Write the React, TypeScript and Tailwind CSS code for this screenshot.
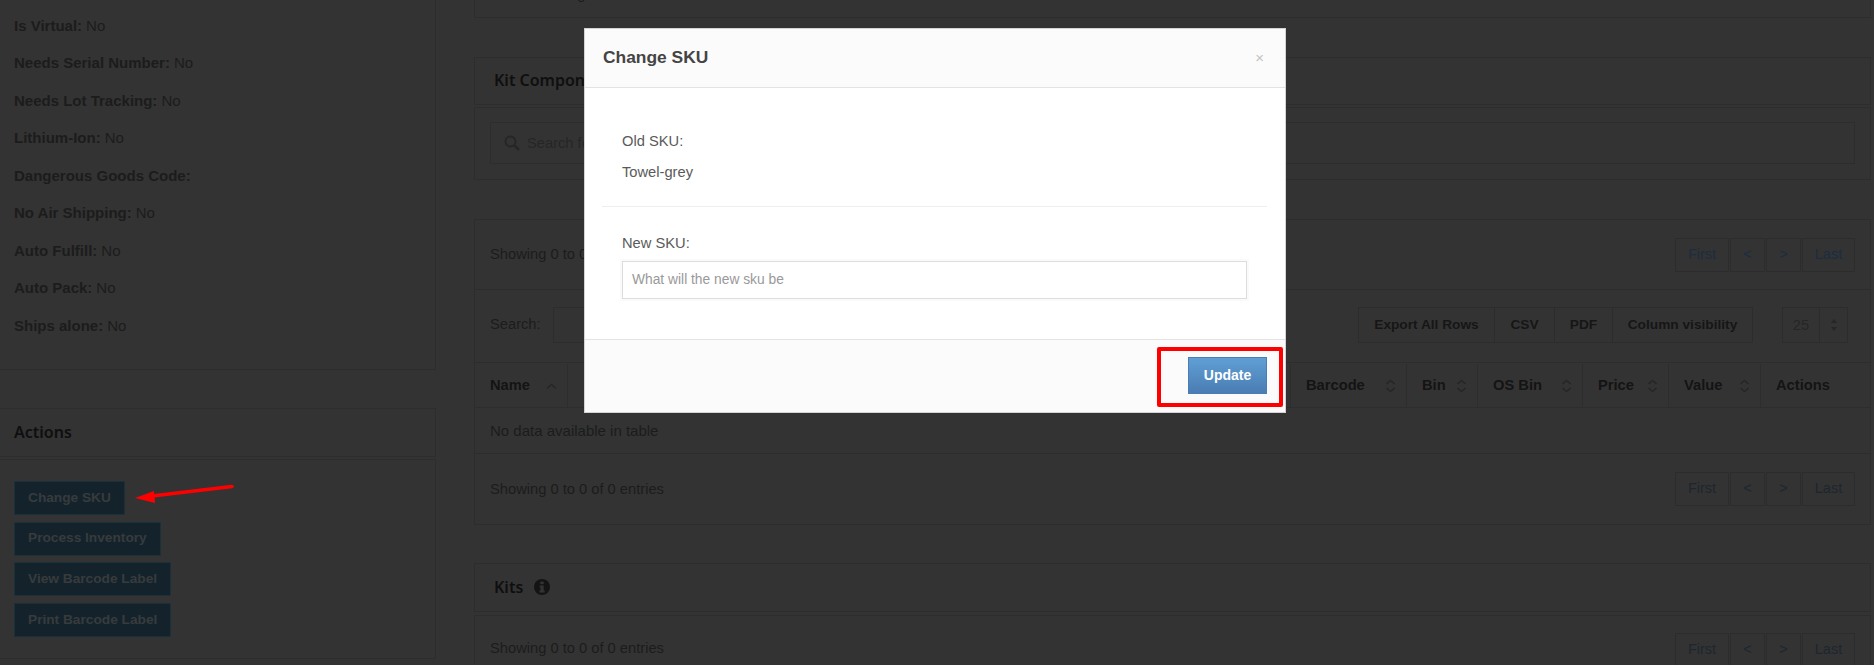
import React from "react";

const sans = "font-['Liberation_Sans',Arial,sans-serif]";
const head = "font-['Noto_Sans','Open_Sans',sans-serif]";

function Sort({ only }: { only?: boolean }) {
  return (
    <svg width="11" height="14" viewBox="0 0 11 14" fill="none" stroke="#262626" strokeWidth="1.6" className="shrink-0">
      {only ? (
        <path d="M1 9.5 L5.5 5.5 L10 9.5" />
      ) : (
        <>
          <path d="M1.5 5 L5.5 1.5 L9.5 5" />
          <path d="M1.5 9 L5.5 12.5 L9.5 9" />
        </>
      )}
    </svg>
  );
}

function Pager({ tone }: { tone: string }) {
  return (
    <div className={`flex text-[14.5px] ${tone}`}>
      {[
        ["First", "w-[54px] mr-[1px]"],
        ["<", "w-[35px] mr-[1px]"],
        [">", "w-[35px] mr-[1px]"],
        ["Last", "w-[53px]"],
      ].map(([t, c]) => (
        <div key={t} className={`h-[34px] flex items-center justify-center border border-[#2c2c2c] ${c}`}>{t}</div>
      ))}
    </div>
  );
}

function Field({ label, value }: { label: string; value?: string }) {
  return (
    <div className="h-[37.5px] flex items-center text-[15px] text-[#1c1c1c]">
      <b className="font-bold mr-[4px]">{label}</b>
      {value && <span>{value}</span>}
    </div>
  );
}

const actionButtons = ["Change SKU", "Process Inventory", "View Barcode Label", "Print Barcode Label"];

const columns: [string, string][] = [
  ["Barcode", "w-[116px]"],
  ["Bin", "w-[71px]"],
  ["OS Bin", "w-[105px]"],
  ["Price", "w-[86px]"],
  ["Value", "w-[92px]"],
];

export default function App() {
  return (
    <div className={`relative h-[665px] w-full overflow-hidden bg-[#333333] ${sans}`}>
      <div className="flex items-start pr-[3px]">
        {/* Left column */}
        <div className="w-[436px] shrink-0">
          <div className="h-[370px] border-r border-b border-[#2d2d2d] pt-[7px] pl-[14px]">
            <Field label="Is Virtual:" value="No" />
            <Field label="Needs Serial Number:" value="No" />
            <Field label="Needs Lot Tracking:" value="No" />
            <Field label="Lithium-Ion:" value="No" />
            <Field label="Dangerous Goods Code:" />
            <Field label="No Air Shipping:" value="No" />
            <Field label="Auto Fulfill:" value="No" />
            <Field label="Auto Pack:" value="No" />
            <Field label="Ships alone:" value="No" />
          </div>
          <div className={`mt-[38px] h-[49px] pb-[2px] flex items-center pl-[14px] border-y border-r border-[#2d2d2d] text-[16px] font-semibold text-[#0f0f0f] ${head}`}>
            Actions
          </div>
          <div className="mt-[2px] h-[200px] border-y border-r border-[#2d2d2d] pl-[14px] pt-[21px] flex flex-col items-start gap-[6.7px]">
            {actionButtons.map((t) => (
              <div key={t} className="h-[34px] px-[13px] flex items-center border border-[#1a303a] bg-[#14232b] text-[13.7px] font-bold text-[#373b3d]">
                {t}
              </div>
            ))}
          </div>
        </div>

        {/* Right column */}
        <div className="ml-[38px] flex-1 min-w-0 text-[14.7px] text-[#1c1c1c]">
          <div className="h-[18px] overflow-hidden border-x border-b border-[#2d2d2d] pl-[54px]">
            <div className="-mt-[16px] leading-[20px]">Showing</div>
          </div>

          <div className={`mt-[39px] h-[48px] pb-[2px] flex items-center pl-[19px] border border-[#2d2d2d] text-[16px] font-semibold text-[#0f0f0f] ${head}`}>
            Kit Components
          </div>
          <div className="mt-[2px] h-[73px] border border-[#2d2d2d] px-[15px] pt-[14px]">
            <div className="h-[42px] flex items-center border border-[#2d2d2d] pl-[13px] text-[#262626]">
              <svg width="16" height="16" viewBox="0 0 16 16" fill="none" stroke="#262626" strokeWidth="2" className="mr-[7px]">
                <circle cx="6.5" cy="6.5" r="5" />
                <path d="M10.5 10.5 L15 15" strokeWidth="2.6" />
              </svg>
              Search for
            </div>
          </div>

          <div className="mt-[39px] border border-[#2d2d2d]">
            <div className="h-[70px] px-[15px] flex items-center justify-between border-b border-[#2d2d2d]">
              <span>Showing 0 to 0</span>
              <Pager tone="text-[#1b2d40]" />
            </div>
            <div className="h-[73px] pl-[15px] pr-[22px] pb-[2px] flex items-center justify-between border-b border-[#2d2d2d]">
              <div className="flex items-center">
                <span className="w-[63px] -mt-[2px]">Search:</span>
                <div className="w-[200px] h-[36px] border border-[#2d2d2d]" />
              </div>
              <div className="flex items-center">
                <div className="flex w-[395px] h-[36px] border border-[#2c2c2c] text-[13.7px] font-bold text-[#161616]">
                  <div className="w-[135px] flex items-center justify-center">Export All Rows</div>
                  <div className="w-[60px] flex items-center justify-center border-l border-[#2c2c2c]">CSV</div>
                  <div className="w-[58px] flex items-center justify-center border-l border-[#2c2c2c]">PDF</div>
                  <div className="flex-1 flex items-center justify-center border-l border-[#2c2c2c]">Column visibility</div>
                </div>
                <div className="ml-[29px] w-[66px] h-[36px] flex border border-[#2c2c2c] text-[#262626]">
                  <div className="w-[37px] flex items-center justify-center border-r border-[#2c2c2c]">25</div>
                  <div className="flex-1 flex items-center justify-center">
                    <svg width="8" height="14" viewBox="0 0 8 14" fill="#262626">
                      <path d="M4 1 L7 5 H1 Z M4 13 L1 9 H7 Z" />
                    </svg>
                  </div>
                </div>
              </div>
            </div>
            <div className="h-[45px] pt-[1px] flex border-b border-[#2d2d2d] font-bold text-[#141414]">
              <div className="w-[93px] pl-[15px] pr-[10px] flex items-center justify-between border-r border-[#2d2d2d]">
                Name <Sort only />
              </div>
              <div className="flex-1" />
              {columns.map(([t, w]) => (
                <div key={t} className={`${w} pl-[15px] pr-[10px] flex items-center justify-between border-l border-[#2d2d2d]`}>
                  {t} <Sort />
                </div>
              ))}
              <div className="w-[110px] pl-[15px] flex items-center border-l border-[#2d2d2d]">Actions</div>
            </div>
            <div className="h-[46px] pt-[1px] px-[15px] flex items-center border-b border-[#2d2d2d] text-[15px]">No data available in table</div>
            <div className="h-[70px] px-[15px] flex items-center justify-between">
              <span>Showing 0 to 0 of 0 entries</span>
              <Pager tone="text-[#1d262e]" />
            </div>
          </div>

          <div className={`mt-[38px] h-[49px] pb-[2px] flex items-center pl-[19px] border border-[#2d2d2d] text-[16px] font-semibold text-[#0f0f0f] ${head}`}>
            Kits
            <svg width="16" height="16" viewBox="0 0 16 16" className="ml-[11px]">
              <circle cx="8" cy="8" r="8" fill="#141414" />
              <rect x="6.3" y="2.6" width="3.4" height="2.6" fill="#333333" />
              <path d="M5.6 6.4 H9.7 V11.5 H10.7 V13.4 H5.4 V11.5 H6.4 V8.3 H5.6 Z" fill="#333333" />
            </svg>
          </div>
          <div className="mt-[3px] h-[90px] border border-[#2d2d2d] px-[15px] pt-[17px] flex items-start justify-between">
            <span className="mt-[4px]">Showing 0 to 0 of 0 entries</span>
            <Pager tone="text-[#1d262e]" />
          </div>
        </div>
      </div>

      {/* Arrow annotation */}
      <svg width="110" height="24" viewBox="0 0 110 24" className="absolute left-[132px] top-[480px]">
        <path d="M100 6.5 L20 16" stroke="#ff0000" strokeWidth="3.5" strokeLinecap="round" />
        <path d="M3 18 L22 11 L23 23 Z" fill="#ff0000" />
      </svg>

      {/* Modal */}
      <div className="absolute left-[584px] top-[28px] w-[702px] h-[385px] flex flex-col bg-white border border-[#d4d4d4]">
        <div className="h-[59px] shrink-0 flex items-center justify-between pl-[18px] pr-[21px] bg-[#fbfbfb] border-b border-[#e3e3e3]">
          <span className="text-[17.4px] font-bold text-[#444444] mb-[2px]">Change SKU</span>
          <span className="text-[15px] text-[#c4c4c4]">×</span>
        </div>
        <div className="flex-1 pl-[17px] pr-[18px] text-[14.7px] text-[#5a5a5a]">
          <div className="mt-[43px] ml-[20px] leading-[20px]">Old SKU:</div>
          <div className="mt-[11px] ml-[20px] leading-[20px]">Towel-grey</div>
          <div className="mt-[24px] border-t border-[#eeeeee]" />
          <div className="mt-[26px] ml-[20px] leading-[20px]">New SKU:</div>
          <div className="mt-[8px] mx-[20px] h-[38px] flex items-center pl-[9px] border border-[#dddddd] text-[13.8px] text-[#999999] shadow-[0_0_0_2px_#fafafa]">
            What will the new sku be
          </div>
        </div>
        <div className="h-[73px] shrink-0 flex items-start justify-end pt-[17px] pr-[18px] bg-[#fbfbfb] border-t border-[#e3e3e3]">
          <div className="w-[79px] h-[37px] flex items-center justify-center bg-gradient-to-b from-[#5f9fd4] to-[#4a7db3] border border-[#4a7db3] text-[14px] font-bold text-white">
            Update
          </div>
        </div>
      </div>

      {/* Highlight annotation */}
      <div className="absolute left-[1157px] top-[347px] w-[126px] h-[60px] border-[4px] border-[#ff0000] rounded-[2px]" />
    </div>
  );
}
